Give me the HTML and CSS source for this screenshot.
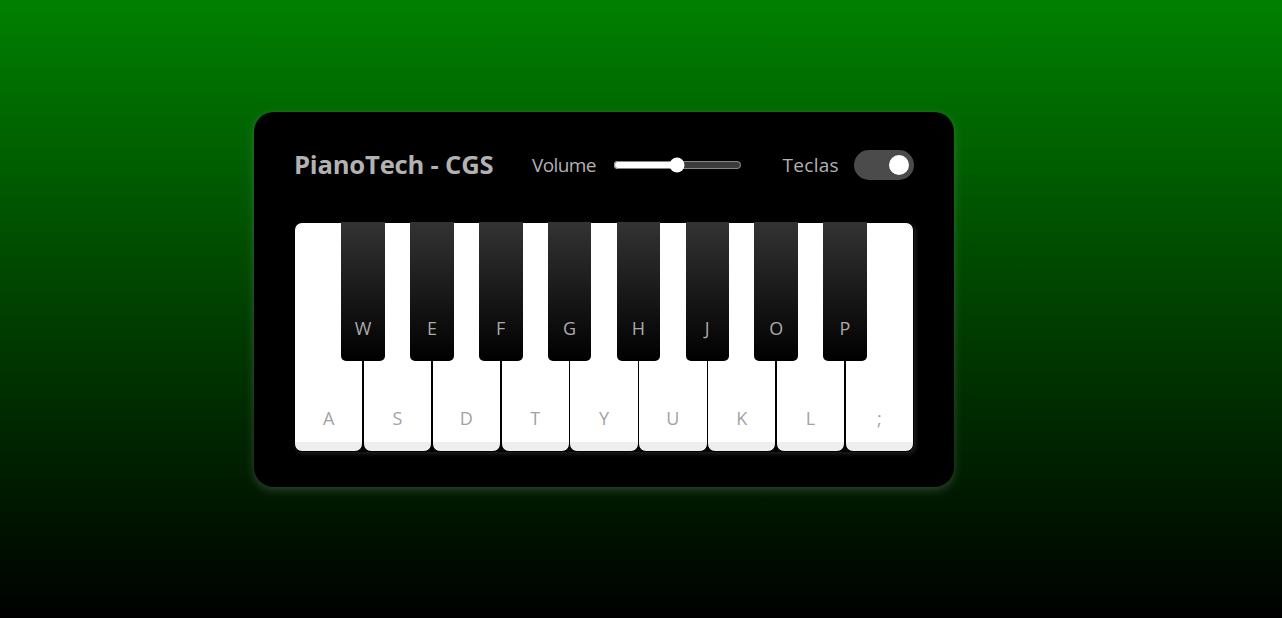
FILE: index.html
```html
<!DOCTYPE html>
<html lang="pt">
<head>
<meta charset="utf-8">
<title>PianoTech - CGS</title>
<link rel="stylesheet" href="styles.css">
</head>
<body>
  <div class="wrapper">
    <header>
      <h2>PianoTech - CGS</h2>
      <div class="column volume-slider">
        <span>Volume</span><input type="range" min="0" max="1" value="0.5" step="any">
      </div>
      <div class="column keys-checkbox">
        <span>Teclas</span><input type="checkbox" checked>
      </div>
    </header>
    <ul class="piano-keys">
      <li class="key white"><span>a</span></li>
      <li class="key black"><span>w</span></li>
      <li class="key white"><span>s</span></li>
      <li class="key black"><span>e</span></li>
      <li class="key white"><span>d</span></li>
      <li class="key black"><span>f</span></li>
      <li class="key white"><span>t</span></li>
      <li class="key black"><span>g</span></li>
      <li class="key white"><span>y</span></li>
      <li class="key black"><span>h</span></li>
      <li class="key white"><span>u</span></li>
      <li class="key black"><span>j</span></li>
      <li class="key white"><span>k</span></li>
      <li class="key black"><span>o</span></li>
      <li class="key white"><span>l</span></li>
      <li class="key black"><span>p</span></li>
      <li class="key white"><span>;</span></li>
    </ul>
  </div>
</body>
</html>
```

FILE: styles.css
```css
* {
  margin: 0;
  padding: 0;
  box-sizing: border-box;
}

body {
  font-family: "Comic Sans MS", "Open Sans", "DejaVu Sans", sans-serif;
  min-height: 100vh;
  background: linear-gradient(to bottom, #008000 0%, #000 100%);
  display: flex;
  align-items: flex-start;
  padding: 112px 0 0 254px;
}

.wrapper {
  width: 700px;
  padding: 35px 40px;
  border-radius: 20px;
  background: #000;
  box-shadow: 0 3px 10px rgba(255, 255, 255, 0.18);
}

.wrapper header {
  display: flex;
  height: 35px;
  color: #b2b2b2;
  align-items: center;
  justify-content: space-between;
}

header h2 {
  font-size: 25.6px;
  font-weight: 700;
  line-height: 35px;
  letter-spacing: -0.2px;
}

header .column {
  display: flex;
  align-items: center;
}

header span {
  font-weight: 500;
  margin-right: 15px;
  font-size: 19px;
  line-height: 26px;
}

.volume-slider span {
  letter-spacing: -0.6px;
}

.keys-checkbox span {
  letter-spacing: 0.3px;
}

header input {
  outline: none;
  border-radius: 30px;
}

.volume-slider input {
  accent-color: #fff;
  width: 129px;
  margin: 2px;
}

.keys-checkbox input {
  height: 30px;
  width: 60px;
  cursor: pointer;
  appearance: none;
  position: relative;
  background: #4b4b4b;
}

.keys-checkbox input::before {
  content: "";
  position: absolute;
  top: 50%;
  left: 5px;
  width: 20px;
  height: 20px;
  border-radius: 50%;
  transform: translateY(-50%);
  background: #8c8c8c;
}

.keys-checkbox input:checked::before {
  left: 35px;
  background: #fff;
}

.piano-keys {
  display: flex;
  list-style: none;
  margin-top: 40px;
  box-shadow: 2px 2px 4px rgba(255, 255, 255, 0.12);
  border-radius: 8px;
}

.piano-keys .key {
  position: relative;
  text-transform: uppercase;
  border-radius: 8px;
  user-select: none;
}

.piano-keys .black {
  z-index: 2;
  width: 44px;
  height: 139px;
  margin: 0 -22px;
  border-radius: 0 0 5px 5px;
  background: linear-gradient(#333, #000);
}

.piano-keys .white {
  height: 230px;
  width: 70px;
  border: 1px solid #000;
  background: linear-gradient(#fff 96%, #eee 4%);
}

.piano-keys span {
  position: absolute;
  bottom: 20px;
  width: 100%;
  color: #a2a2a2;
  font-size: 18px;
  line-height: 25px;
  text-align: center;
}

.piano-keys .black span {
  bottom: 20px;
  color: #aaa;
}
```
